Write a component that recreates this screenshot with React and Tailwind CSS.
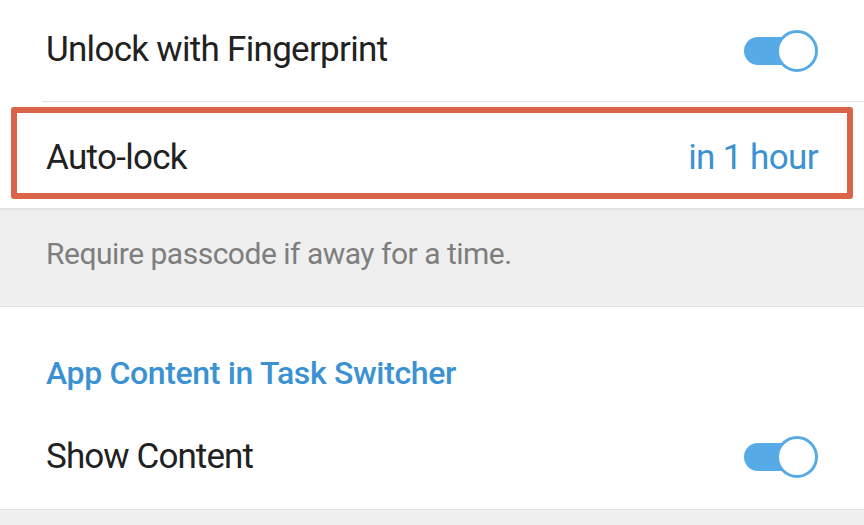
import React from 'react';

function Toggle() {
  return (
    <div className="relative w-[74px] h-[44px] flex items-center">
      <div className="h-[28px] w-[60px] rounded-full bg-[#56abe6]" />
      <div className="absolute right-0 top-[1px] w-[42px] h-[42px] rounded-full bg-white border-[3px] border-[#56abe6]" />
    </div>
  );
}

export default function App() {
  return (
    <div className="w-[864px] h-[525px] overflow-hidden bg-[#efefef] font-['Roboto',sans-serif]">
      <div className="bg-white">
        <div className="h-[101px] flex items-center justify-between pl-[46px] pr-[46px]">
          <span className="text-[35px] text-[#212121] tracking-[-0.7px]">Unlock with Fingerprint</span>
          <Toggle />
        </div>
        <div className="ml-[42px] h-px bg-[#e3e3e3]" />
        <div className="h-[106px] pt-[5px]">
          <div className="mx-[11px] h-[92px] border-[6px] border-[#d9644a] rounded-[3px] flex items-center justify-between pt-[10px] pl-[29px] pr-[29px]">
            <span className="text-[35px] text-[#212121] tracking-[-0.7px]">Auto-lock</span>
            <span className="text-[35px] text-[#3a92d2] tracking-[-0.6px]">in 1 hour</span>
          </div>
        </div>
      </div>
      <div className="h-[2px] bg-[#e3e3e3]" />
      <div className="h-[96px] flex items-center pb-[10px] pl-[46px]">
        <span className="text-[30px] text-[#7e7e7e] tracking-[-0.5px]">Require passcode if away for a time.</span>
      </div>
      <div className="h-px bg-[#e0e0e0]" />
      <div className="bg-white h-[202px]">
        <div className="h-[110px] flex items-end pb-[20px] pl-[46px]">
          <span className="text-[32px] font-medium text-[#3a92d2] tracking-[-0.35px]">App Content in Task Switcher</span>
        </div>
        <div className="h-[72px] flex items-center justify-between pt-[8px] pl-[46px] pr-[46px]">
          <span className="text-[35px] text-[#212121] tracking-[-0.9px]">Show Content</span>
          <Toggle />
        </div>
      </div>
      <div className="h-px bg-[#e0e0e0]" />
    </div>
  );
}
